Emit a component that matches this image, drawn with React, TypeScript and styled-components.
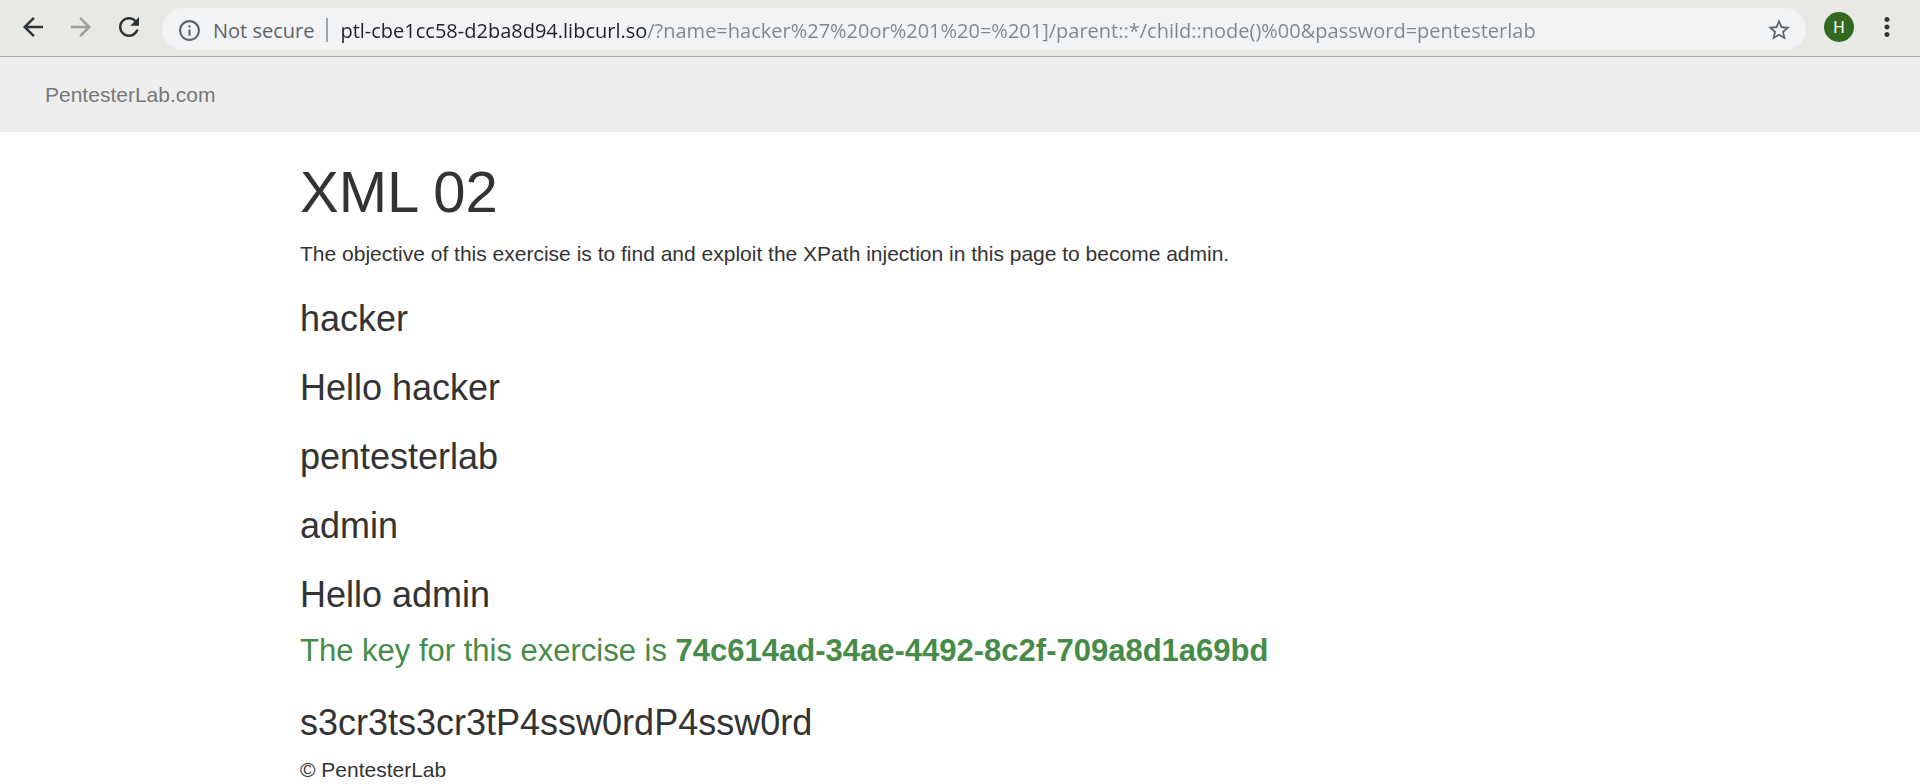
import React from 'react';
import styled, { createGlobalStyle } from 'styled-components';

const GlobalStyle = createGlobalStyle`
  * { box-sizing: border-box; }
  body {
    margin: 0;
    background: #ffffff;
    color: #333333;
    font-family: "Liberation Sans", Arial, sans-serif;
    font-size: 21px;
    line-height: 31px;
  }
`;

const Toolbar = styled.header`
  display: flex;
  align-items: flex-start;
  gap: 9px;
  padding: 8px 9px 6px;
  background: #e8e8e5;
  border-bottom: 1px solid #a9aaa7;
`;

const ButtonGroup = styled.div`
  display: flex;
`;

const ToolButton = styled.button<{ $muted?: boolean }>`
  display: grid;
  place-items: center;
  width: 48px;
  height: 38px;
  padding: 0;
  border: 0;
  background: transparent;
  color: ${({ $muted }) => ($muted ? '#9c9d9c' : '#2d3436')};
`;

const Avatar = styled.span`
  display: grid;
  place-items: center;
  width: 30px;
  height: 30px;
  border-radius: 50%;
  background: #33691e;
  color: #ffffff;
  font-family: Roboto, sans-serif;
  font-size: 16px;
`;

const AddressBar = styled.form`
  display: flex;
  flex: 1;
  align-items: center;
  gap: 12px;
  min-width: 0;
  height: 42px;
  padding: 2px 14px 0 15px;
  border-radius: 21px;
  background: #f1f3f5;
  color: #5f6368;
  font-family: "Open Sans", "Noto Sans", sans-serif;
  font-size: 20px;
`;

const SecurityButton = styled.button`
  display: flex;
  align-items: center;
  gap: 11px;
  padding: 0;
  border: 0;
  background: transparent;
  color: inherit;
  font: inherit;
  white-space: nowrap;
`;

const Divider = styled.span`
  width: 2px;
  height: 24px;
  background: #9fa2a5;
`;

const HOST_WIDTH = '307px';

/* The host part is dark and the path grey, as one editable value. */
const UrlInput = styled.input`
  flex: 1;
  min-width: 0;
  height: 30px;
  padding: 0;
  border: 0;
  outline: 0;
  background: linear-gradient(to right, #202124 ${HOST_WIDTH}, #80868b ${HOST_WIDTH});
  background-clip: text;
  -webkit-background-clip: text;
  -webkit-text-fill-color: transparent;
  color: #80868b;
  font: inherit;
`;

const StarButton = styled.button`
  display: flex;
  padding: 0;
  border: 0;
  background: transparent;
  color: inherit;
`;

const SiteNav = styled.nav`
  padding: 22px 45px;
  background: #eeeeee;
`;

const BrandLink = styled.a`
  color: #777777;
  text-decoration: none;
`;

const Content = styled.main`
  width: 68.75%;
  margin: 29px auto 0;
`;

const Title = styled.h1`
  margin: 0 0 15px;
  font-size: 58px;
  font-weight: 400;
  line-height: 62px;
`;

const Lead = styled.p`
  margin: 0;
`;

const Result = styled.h3`
  margin: 30px 0 15px;
  font-size: 36px;
  font-weight: 400;
  line-height: 39px;
`;

const KeyMessage = styled.p`
  margin: 0;
  color: #468b48;
  font-size: 31px;
  line-height: 44px;
`;

const Footer = styled.footer`
  line-height: 26px;
`;

function Icon({ size, path }: { size: number; path: string }) {
  return (
    <svg width={size} height={size} viewBox="0 0 24 24" fill="currentColor" aria-hidden="true">
      <path d={path} />
    </svg>
  );
}

const icons = {
  back: 'M20 11H7.83l5.59-5.59L12 4l-8 8 8 8 1.41-1.41L7.83 13H20v-2z',
  forward: 'M12 4l-1.41 1.41L16.17 11H4v2h12.17l-5.58 5.59L12 20l8-8z',
  reload:
    'M17.65 6.35C16.2 4.9 14.21 4 12 4c-4.42 0-7.99 3.58-7.99 8s3.57 8 7.99 8c3.73 0 6.84-2.55 7.73-6h-2.08c-.82 2.33-3.04 4-5.65 4-3.31 0-6-2.69-6-6s2.69-6 6-6c1.66 0 3.14.69 4.22 1.78L13 11h7V4l-2.35 2.35z',
  info: 'M11 7h2v2h-2zm0 4h2v6h-2zm1-9C6.48 2 2 6.48 2 12s4.48 10 10 10 10-4.48 10-10S17.52 2 12 2zm0 18c-4.41 0-8-3.59-8-8s3.59-8 8-8 8 3.59 8 8-3.59 8-8 8z',
  star: 'M22 9.24l-7.19-.62L12 2 9.19 8.63 2 9.24l5.46 4.73L5.82 21 12 17.27 18.18 21l-1.63-7.03L22 9.24zM12 15.4l-3.76 2.27 1-4.28-3.32-2.88 4.38-.38L12 6.1l1.71 4.04 4.38.38-3.32 2.88 1 4.28L12 15.4z',
  more: 'M12 8c1.1 0 2-.9 2-2s-.9-2-2-2-2 .9-2 2 .9 2 2 2zm0 2c-1.1 0-2 .9-2 2s.9 2 2 2 2-.9 2-2-.9-2-2-2zm0 6c-1.1 0-2 .9-2 2s.9 2 2 2 2-.9 2-2-.9-2-2-2z',
};

const url =
  'ptl-cbe1cc58-d2ba8d94.libcurl.so/?name=hacker%27%20or%201%20=%201]/parent::*/child::node()%00&password=pentesterlab';

const results = ['hacker', 'Hello hacker', 'pentesterlab', 'admin', 'Hello admin'];

export default function App() {
  return (
    <>
      <GlobalStyle />
      <Toolbar>
        <ButtonGroup>
          <ToolButton aria-label="Back"><Icon size={30} path={icons.back} /></ToolButton>
          <ToolButton aria-label="Forward" $muted><Icon size={30} path={icons.forward} /></ToolButton>
          <ToolButton aria-label="Reload"><Icon size={30} path={icons.reload} /></ToolButton>
        </ButtonGroup>
        <AddressBar onSubmit={(e) => e.preventDefault()}>
          <SecurityButton type="button">
            <Icon size={25} path={icons.info} />
            Not secure
          </SecurityButton>
          <Divider />
          <UrlInput type="text" aria-label="Address" defaultValue={url} spellCheck={false} />
          <StarButton type="button" aria-label="Bookmark this page">
            <Icon size={26} path={icons.star} />
          </StarButton>
        </AddressBar>
        <ButtonGroup>
          <ToolButton aria-label="Profile"><Avatar>H</Avatar></ToolButton>
          <ToolButton aria-label="Menu"><Icon size={30} path={icons.more} /></ToolButton>
        </ButtonGroup>
      </Toolbar>
      <SiteNav>
        <BrandLink href="#">PentesterLab.com</BrandLink>
      </SiteNav>
      <Content>
        <Title>XML 02</Title>
        <Lead>
          The objective of this exercise is to find and exploit the XPath injection in this page to
          become admin.
        </Lead>
        {results.map((text) => (
          <Result key={text}>{text}</Result>
        ))}
        <KeyMessage>
          The key for this exercise is <strong>74c614ad-34ae-4492-8c2f-709a8d1a69bd</strong>
        </KeyMessage>
        <Result>s3cr3ts3cr3tP4ssw0rdP4ssw0rd</Result>
        <Footer>© PentesterLab</Footer>
      </Content>
    </>
  );
}
